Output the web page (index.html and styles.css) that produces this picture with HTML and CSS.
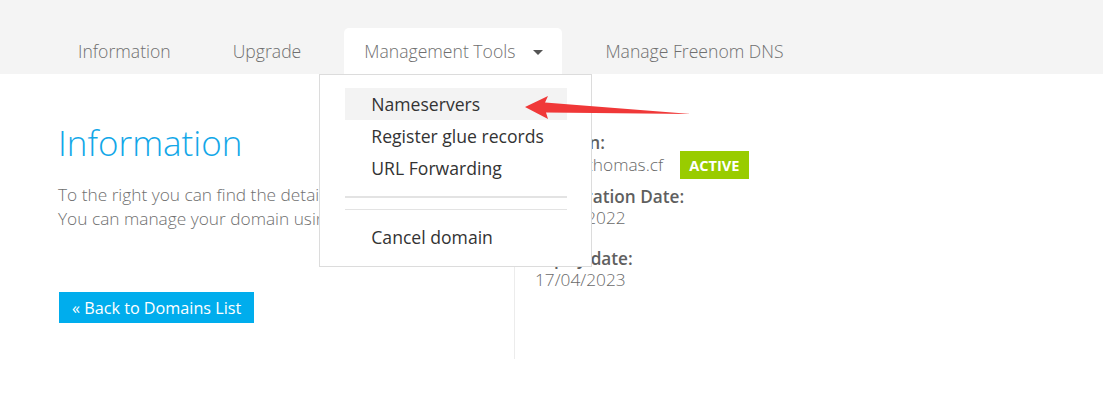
FILE: index.html
```html
<!DOCTYPE html>
<html lang="en">
<head>
<meta charset="utf-8">
<title>Domain Information</title>
<link rel="stylesheet" href="styles.css">
</head>
<body>
<header class="topbar">
  <nav class="tabs">
    <a class="tab tab-first">Information</a>
    <a class="tab">Upgrade</a>
    <div class="tab tab-active">
      <span>Management Tools</span>
      <span class="caret"></span>
      <div class="dropdown">
        <a class="dd-item dd-hover">Nameservers</a>
        <a class="dd-item">Register glue records</a>
        <a class="dd-item">URL Forwarding</a>
        <div class="dd-divider dd-divider-thick"></div>
        <div class="dd-divider"></div>
        <a class="dd-item">Cancel domain</a>
      </div>
    </div>
    <a class="tab">Manage Freenom DNS</a>
  </nav>
</header>
<main class="content">
  <section class="left">
    <h1 class="title">Information</h1>
    <p class="intro">To the right you can find the details of your domain.<br>You can manage your domain using the tabs above.</p>
    <a class="btn">« Back to Domains List</a>
  </section>
  <section class="right">
    <div class="group group-domain">
      <div class="label">Domain:</div>
      <div class="value value-row"><span>sophiethomas.cf</span><span class="badge">ACTIVE</span></div>
    </div>
    <div class="group">
      <div class="label">Registration Date:</div>
      <div class="value">17/04/2022</div>
    </div>
    <div class="group">
      <div class="label">Expiry date:</div>
      <div class="value">17/04/2023</div>
    </div>
  </section>
</main>
<svg class="arrow" width="1103" height="418" viewBox="0 0 1103 418">
  <polygon points="525,107 548,96 545,102.5 691,114 546,112.5 548,119" fill="#f03838"/>
</svg>
</body>
</html>
```
FILE: styles.css
```css
* { box-sizing: border-box; }
html, body { margin: 0; padding: 0; }
body {
  background: #fff;
  font-family: "Open Sans", "Liberation Sans", sans-serif;
  color: #777;
  width: 1103px;
  height: 418px;
  overflow: hidden;
  position: relative;
}
.topbar {
  background: #f4f4f4;
  height: 74px;
}
.tabs {
  display: flex;
  align-items: flex-end;
  height: 74px;
  padding-left: 57px;
  gap: 23px;
}
.tab {
  display: flex;
  align-items: center;
  height: 46px;
  padding: 0 20px;
  font-size: 17.6px;
  font-weight: 300;
  color: #6f6f6f;
  text-decoration: none;
}
.tab-first { padding-left: 21px; padding-right: 19px; }
.tab-active {
  position: relative;
  background: #fff;
  border-radius: 5px 5px 0 0;
  padding-right: 19px;
}
.caret {
  display: inline-block;
  width: 0;
  height: 0;
  margin-left: 18px;
  margin-top: 2px;
  border-left: 5px solid transparent;
  border-right: 5px solid transparent;
  border-top: 5px solid #555;
}
.dropdown {
  position: absolute;
  left: -25px;
  top: 46px;
  width: 273px;
  height: 193px;
  background: #fff;
  border: 1px solid #dcdcdc;
  padding: 13px 24px 0 25px;
  z-index: 5;
}
.dd-item {
  display: flex;
  align-items: center;
  height: 32px;
  padding-left: 26px;
  font-size: 17.6px;
  font-weight: 400;
  color: #333;
  text-decoration: none;
}
.dd-hover { background: #f3f3f3; }
.dd-divider {
  height: 1px;
  background: #e3e3e3;
  margin-top: 11px;
}
.dd-divider-thick {
  height: 2px;
  margin-top: 12px;
}
.dd-divider + .dd-item { margin-top: 11px; }

.content {
  display: flex;
  padding-left: 58px;
}
.left {
  width: 457px;
  padding-top: 49px;
  padding-bottom: 36px;
  border-right: 1px solid #ececec;
}
.title {
  margin: 0;
  font-size: 35px;
  line-height: 40px;
  font-weight: 300;
  color: #12a7e8;
}
.intro {
  margin: 20px 0 0 0;
  font-size: 17.3px;
  line-height: 24px;
  font-weight: 300;
  color: #707070;
  white-space: nowrap;
}
.btn {
  display: inline-flex;
  align-items: center;
  margin: 61px 0 0 1px;
  height: 31px;
  padding: 0 13px 0 13px;
  background: #00aded;
  color: #fff;
  font-size: 16.2px;
  font-weight: 400;
  text-decoration: none;
}
.right {
  padding-left: 20px;
  padding-top: 58px;
}
.group { margin-bottom: 19px; }
.group-domain { margin-bottom: 7px; }
.label {
  font-size: 17.2px;
  line-height: 21px;
  font-weight: 600;
  color: #5f5f5f;
}
.value {
  font-size: 17.3px;
  line-height: 22px;
  font-weight: 300;
  color: #6a6a6a;
}
.value-row {
  display: flex;
  align-items: center;
  height: 28px;
  margin-top: -2px;
}
.badge {
  display: inline-flex;
  align-items: center;
  height: 28px;
  margin-left: 17px;
  padding: 0 9px;
  background: #99cc00;
  color: #fff;
  font-size: 14.6px;
  font-weight: 700;
}
.arrow {
  position: absolute;
  left: 0;
  top: 0;
  z-index: 10;
  pointer-events: none;
}
```
